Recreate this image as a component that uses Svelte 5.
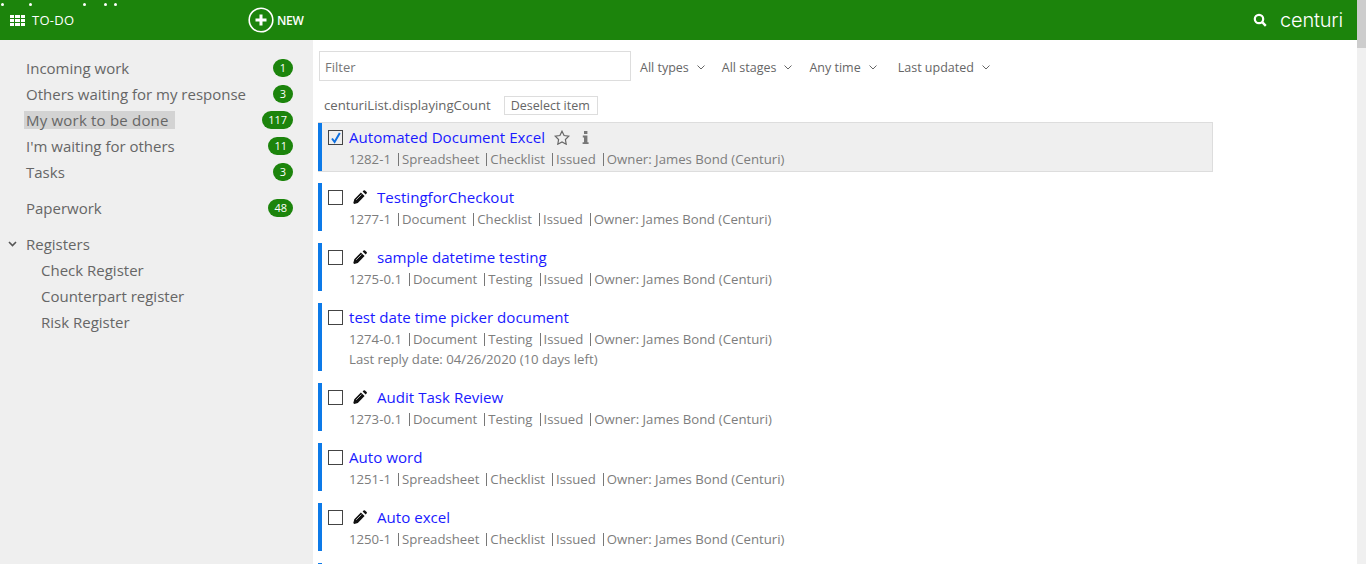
<script>
  const nav = [
    { label: "Incoming work", count: 1 },
    { label: "Others waiting for my response", count: 3 },
    { label: "My work to be done", count: 117, active: true },
    { label: "I'm waiting for others", count: 11 },
    { label: "Tasks", count: 3 }
  ];
  const registers = ["Check Register", "Counterpart register", "Risk Register"];
  const filters = ["All types", "All stages", "Any time", "Last updated"];
  const items = [
    { title: "Automated Document Excel", meta: ["1282-1", "Spreadsheet", "Checklist", "Issued", "Owner: James Bond (Centuri)"], selected: true },
    { title: "TestingforCheckout", meta: ["1277-1", "Document", "Checklist", "Issued", "Owner: James Bond (Centuri)"], edit: true },
    { title: "sample datetime testing", meta: ["1275-0.1", "Document", "Testing", "Issued", "Owner: James Bond (Centuri)"], edit: true },
    { title: "test date time picker document", meta: ["1274-0.1", "Document", "Testing", "Issued", "Owner: James Bond (Centuri)"], note: "Last reply date: 04/26/2020 (10 days left)" },
    { title: "Audit Task Review", meta: ["1273-0.1", "Document", "Testing", "Issued", "Owner: James Bond (Centuri)"], edit: true },
    { title: "Auto word", meta: ["1251-1", "Spreadsheet", "Checklist", "Issued", "Owner: James Bond (Centuri)"] },
    { title: "Auto excel", meta: ["1250-1", "Spreadsheet", "Checklist", "Issued", "Owner: James Bond (Centuri)"], edit: true },
    { title: "", meta: [] }
  ];
  const dots = [1, 29, 83, 104, 114];
</script>

<div class="page">
  <header class="topbar">
    {#each dots as d}
      <span class="dot" style="left: {d}px"></span>
    {/each}
    <div class="todo">
      <svg width="15" height="11" viewBox="0 0 15 11" fill="#fff">
        <rect x="0" y="0" width="4" height="3" /><rect x="5" y="0" width="5" height="3" /><rect x="11" y="0" width="4" height="3" />
        <rect x="0" y="4" width="4" height="3" /><rect x="5" y="4" width="5" height="3" /><rect x="11" y="4" width="4" height="3" />
        <rect x="0" y="8" width="4" height="3" /><rect x="5" y="8" width="5" height="3" /><rect x="11" y="8" width="4" height="3" />
      </svg>
      <span>TO-DO</span>
    </div>
    <div class="new">
      <svg width="26" height="26" viewBox="0 0 26 26">
        <circle cx="13" cy="13" r="11.8" fill="none" stroke="#fff" stroke-width="1.6" />
        <path d="M13 7.5v11M7.5 13h11" stroke="#fff" stroke-width="3" />
      </svg>
      <span>NEW</span>
    </div>
    <div class="brand">
      <svg width="14" height="14" viewBox="0 0 14 14" fill="none" stroke="#fff">
        <circle cx="6" cy="6" r="4.2" stroke-width="2.2" />
        <path d="M9.2 9.2l3.6 3.6" stroke-width="2.4" />
      </svg>
      <span class="logo">centuri</span>
    </div>
  </header>

  <div class="body">
    <aside class="sidebar">
      {#each nav as n}
        <div class="nav-row">
          <span class="nav-label" class:active={n.active}>{n.label}</span>
          <span class="badge">{n.count}</span>
        </div>
      {/each}
      <div class="nav-row paperwork">
        <span class="nav-label">Paperwork</span>
        <span class="badge">48</span>
      </div>
      <div class="nav-row registers">
        <svg class="caret" width="9" height="6" viewBox="0 0 9 6" fill="none" stroke="#555" stroke-width="1.6">
          <path d="M1 1l3.5 3.5L8 1" />
        </svg>
        <span class="nav-label">Registers</span>
      </div>
      {#each registers as r}
        <div class="nav-row sub"><span class="nav-label">{r}</span></div>
      {/each}
    </aside>

    <main class="content">
      <div class="filters">
        <input class="filter-input" placeholder="Filter" />
        {#each filters as f}
          <span class="filter">
            {f}
            <svg width="8" height="5" viewBox="0 0 8 5" fill="none" stroke="#666" stroke-width="1">
              <path d="M.5.5L4 4 7.5.5" />
            </svg>
          </span>
        {/each}
      </div>
      <div class="count-row">
        <span>centuriList.displayingCount</span>
        <span class="deselect">Deselect item</span>
      </div>

      <div class="list">
        {#each items as item}
          <div class="item" class:selected={item.selected} class:has-note={item.note}>
            {#if item.title}
              <div class="title-row">
                <span class="check">
                  {#if item.selected}
                    <svg width="14" height="14" viewBox="0 0 14 14" fill="none" stroke="#0f6fe0" stroke-width="2">
                      <path d="M3 7.5l2.6 3.5L10.8 2" />
                    </svg>
                  {/if}
                </span>
                {#if item.edit}
                  <svg class="pencil" width="14" height="14" viewBox="0 0 14 14" fill="#111">
                    <path d="M10.6.5a1 1 0 0 1 1.4 0l1.6 1.6a1 1 0 0 1 0 1.4l-1 1-3-3zM7.9 2.4l3.7 3.7-6.8 6.8-3.6 1-.9-.9 1-3.7z" />
                    <path d="M8.4 4.6L3.2 9.8" stroke="#fff" stroke-width=".7" />
                  </svg>
                {/if}
                <a class="title" href="#top">{item.title}</a>
                {#if item.selected}
                  <svg class="star" width="16" height="15" viewBox="0 0 16 15" fill="none" stroke="#666" stroke-width="1.2">
                    <path d="M8 1.2l2.1 4.3 4.7.7-3.4 3.3.8 4.7L8 12l-4.2 2.2.8-4.7L1.2 6.2l4.7-.7z" />
                  </svg>
                  <svg class="info" width="7" height="13" viewBox="0 0 7 13" fill="#777">
                    <rect x="2" y="0" width="3.4" height="3" />
                    <path d="M.8 4.6h4.6v6.6h1.2V13H.6v-1.8h1.4V6.4H.8z" />
                  </svg>
                {/if}
              </div>
              <div class="meta">
                {#each item.meta as m, i}
                  <span class:sep={i > 0}>{m}</span>
                {/each}
              </div>
              {#if item.note}
                <div class="note">{item.note}</div>
              {/if}
            {/if}
          </div>
        {/each}
      </div>
    </main>
    <div class="scrollbar"><div class="thumb"></div></div>
  </div>
</div>

<style>
  :global(body) {
    margin: 0;
    overflow: hidden;
    background: #fff;
  }

  .page {
    height: 564px;
    overflow: hidden;
    display: flex;
    flex-direction: column;
    font-family: "Open Sans", "Noto Sans", sans-serif;
    color: #666;
  }

  .topbar {
    position: relative;
    flex: none;
    height: 40px;
    display: flex;
    align-items: center;
    background: #1c840c;
    color: #fff;
  }

  .dot {
    position: absolute;
    top: 3px;
    width: 3px;
    height: 3px;
    border-radius: 50%;
    background: #fff;
  }

  .todo {
    display: flex;
    align-items: center;
    gap: 7px;
    width: 248px;
    padding-left: 10px;
    box-sizing: border-box;
    font-size: 13px;
    letter-spacing: 0.3px;
  }

  .new {
    display: flex;
    align-items: center;
    gap: 3px;
    font-size: 12px;
    font-weight: 600;
    letter-spacing: -0.3px;
  }

  .brand {
    margin-left: auto;
    margin-right: 23px;
    display: flex;
    align-items: center;
    gap: 13px;
  }

  .logo {
    font-family: "Inter", sans-serif;
    font-size: 20px;
    font-weight: 300;
    letter-spacing: -0.2px;
    line-height: 1;
  }

  .body {
    flex: 1;
    display: flex;
    min-height: 0;
  }

  .sidebar {
    flex: none;
    width: 313px;
    box-sizing: border-box;
    padding: 15px 20px 0 26px;
    background: #efefef;
    font-size: 15px;
  }

  .nav-row {
    position: relative;
    height: 26px;
    display: flex;
    align-items: center;
    justify-content: space-between;
    color: #666;
  }

  .nav-label {
    padding: 0 6px 0 2px;
    margin-left: -2px;
    line-height: 18px;
  }

  .nav-label.active {
    background: #d3d3d3;
    letter-spacing: 0.2px;
  }

  .badge {
    min-width: 20px;
    height: 18px;
    padding: 0 6px;
    box-sizing: border-box;
    border-radius: 9px;
    background: #1c840c;
    color: #fff;
    font-size: 11px;
    line-height: 18px;
    text-align: center;
  }

  .paperwork {
    margin-top: 10px;
  }

  .registers {
    margin-top: 10px;
    justify-content: flex-start;
  }

  .caret {
    position: absolute;
    left: -18px;
    top: 10px;
  }

  .sub {
    padding-left: 15px;
  }

  .content {
    flex: 1;
    min-width: 0;
    padding: 11px 0 0 6px;
  }

  .filters {
    display: flex;
    align-items: center;
    font-size: 12.5px;
    color: #666;
    height: 30px;
  }

  .filter-input {
    width: 312px;
    height: 30px;
    box-sizing: border-box;
    border: 1px solid #ddd;
    padding: 2px 4px 0 5px;
    margin-right: 9px;
    font: inherit;
    font-size: 13px;
    outline: none;
  }

  .filter-input::placeholder {
    color: #777;
    opacity: 1;
  }

  .filter {
    display: flex;
    align-items: center;
    gap: 8px;
    margin-right: 17px;
    padding-top: 2px;
  }

  .filter:last-child {
    margin-left: 4px;
  }

  .count-row {
    display: flex;
    align-items: center;
    height: 20px;
    margin-top: 14px;
    padding-left: 5px;
    font-size: 13.2px;
    color: #666;
  }

  .deselect {
    margin-left: 13px;
    padding: 0 7px 0 6px;
    height: 19px;
    line-height: 17px;
    box-sizing: border-box;
    border: 1px solid #ddd;
    font-size: 12.5px;
  }

  .list {
    margin: 8px 0 0 -1px;
    display: flex;
    flex-direction: column;
    gap: 12px;
  }

  .item {
    width: 895px;
    min-height: 48px;
    box-sizing: border-box;
    border-left: 4px solid #0d7ae8;
    padding: 3px 0 0 6px;
  }

  .item.has-note {
    padding-bottom: 2px;
  }

  .item.selected {
    background: #efefef;
    box-shadow: 0 -1px 0 #ddd, 0 1px 0 #ddd, inset -1px 0 0 #ddd;
  }

  .title-row {
    display: flex;
    align-items: center;
    height: 22px;
  }

  .check {
    flex: none;
    width: 15px;
    height: 15px;
    box-sizing: border-box;
    border: 1px solid #444;
    margin-right: 6px;
    position: relative;
  }

  .check svg {
    position: absolute;
    left: 0;
    top: 0;
  }

  .pencil {
    margin: 0 10px 0 4px;
  }

  .title {
    color: #1a1aff;
    font-size: 15.1px;
    text-decoration: none;
  }

  .star {
    margin-left: 9px;
  }

  .info {
    margin-left: 12px;
  }

  .meta {
    display: flex;
    font-size: 13.2px;
    color: #7d7d7d;
    height: 20px;
    margin-top: 1px;
    align-items: center;
    padding-left: 21px;
  }

  .meta .sep {
    border-left: 1px solid #777;
    margin-left: 7px;
    padding-left: 3px;
    line-height: 13px;
  }

  .note {
    font-size: 13.2px;
    color: #7d7d7d;
    padding-left: 21px;
    height: 20px;
    line-height: 20px;
  }

  .scrollbar {
    position: fixed;
    right: 0;
    top: 0;
    width: 9px;
    height: 564px;
    background: #f0f0f0;
  }

  .thumb {
    height: 48px;
    background: #cdcdcd;
  }
</style>
